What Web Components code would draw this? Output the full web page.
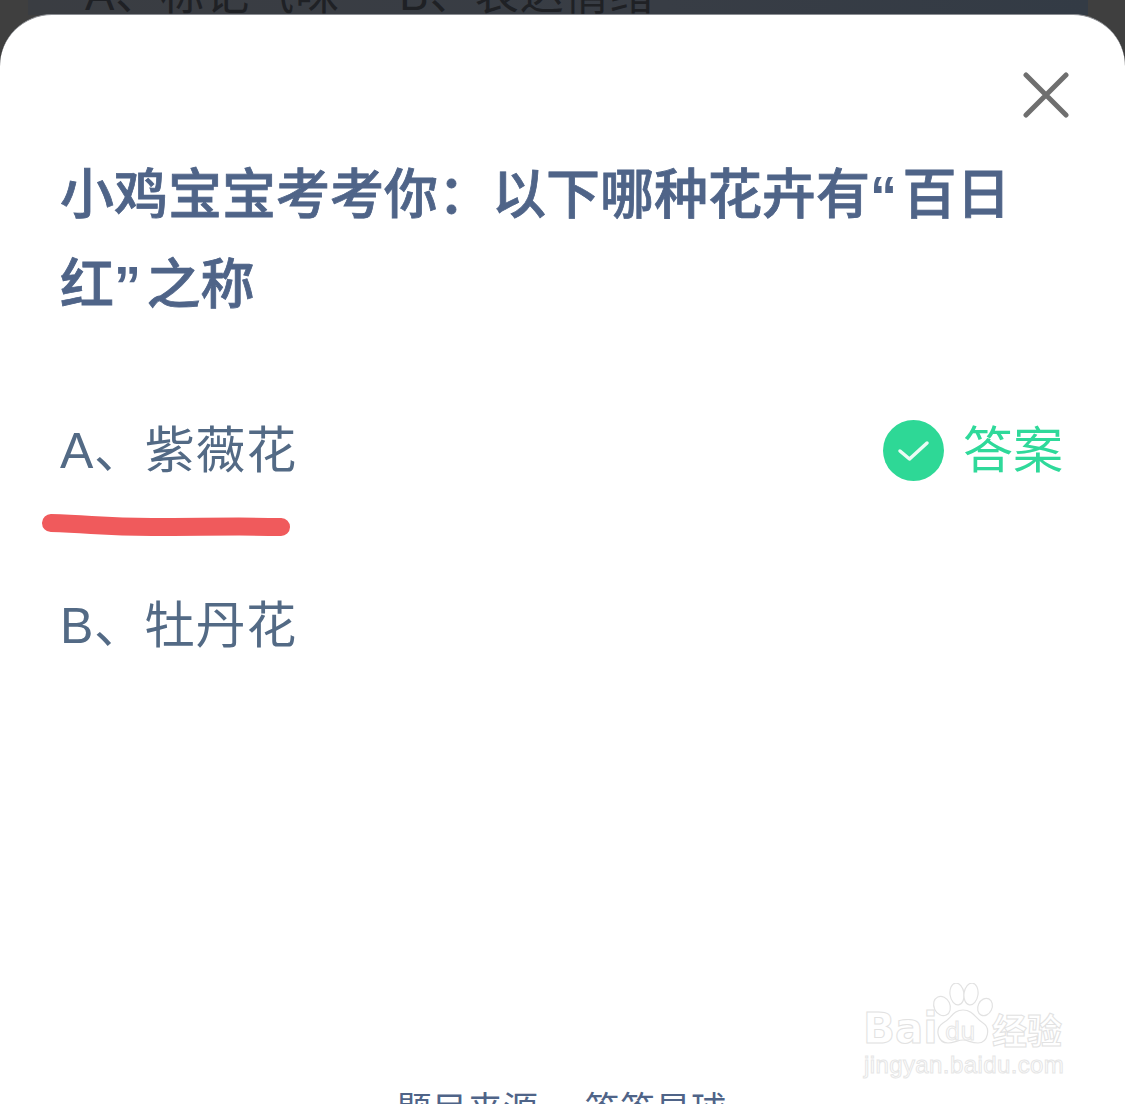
<!DOCTYPE html>
<html lang="zh">
<head>
<meta charset="utf-8">
<title>答题</title>
<style>
  html, body { margin: 0; height: 1104px; overflow: hidden; background: #3f3f3f; }
  body { font-family: "Liberation Sans", "Noto Sans CJK SC", sans-serif; }
  .q { font-weight: 700; letter-spacing: 5.5px; -webkit-text-stroke: 0; }
</style>
</head>
<body>
<quiz-page>
  <span slot="behind">A、标记气味</span>
  <span slot="behind">B、表达情绪</span>
  <quiz-sheet>
    <div slot="title"><span>小鸡宝宝考考你：以下哪种花卉有</span><span class="q">“</span><span>百日</span><br><span>红</span><span class="q">”</span><span>之称</span></div>
    <quiz-option answer marked>A、紫薇花</quiz-option>
    <quiz-option>B、牡丹花</quiz-option>
    <span slot="source">题目来源</span>
    <span slot="source">答答星球</span>
  </quiz-sheet>
  <baidu-mark></baidu-mark>
</quiz-page>

<script>
class QuizPage extends HTMLElement {
  constructor() {
    super();
    this.attachShadow({mode: 'open'}).innerHTML = `
      <style>
        :host { display: flex; flex-direction: column; height: 1104px; position: relative; overflow: hidden; }
        .behind {
          flex: none; height: 15px; margin: 0 37px 0 28px; padding-left: 57px; overflow: hidden;
          background: linear-gradient(90deg, #3a3d42, #383d45 60%, #333b45);
          color: #1f2125; font-size: 44px; line-height: 44px; letter-spacing: 1px;
        }
        .behind-inner { display: flex; gap: 59px; margin-top: -27px; }
      </style>
      <div class="behind"><div class="behind-inner"><slot name="behind"></slot></div></div>
      <slot></slot>
    `;
  }
}

class QuizSheet extends HTMLElement {
  constructor() {
    super();
    this.attachShadow({mode: 'open'}).innerHTML = `
      <style>
        :host {
          display: flex; flex-direction: column; flex: 1; min-height: 0;
          background: #fff; border-radius: 52px 52px 0 0;
          border-top: 1px solid #8a8d92; margin-top: -1px;
          padding: 0 62px 0 60px; color: #4f6488;
        }
        .close { align-self: flex-end; margin: 57px -6px 0 0; width: 46px; height: 46px; flex: none; display: block; }
        .title {
          margin: 32px 0 0 0; max-width: 960px; height: 180px;
          font-size: 54px; line-height: 90px; font-weight: 500; -webkit-text-stroke: .8px #4f6488;
        }
        .options { margin-top: 85px; display: flex; flex-direction: column; flex: 1; }
        .source {
          flex: none; display: flex; justify-content: center; gap: 46px;
          font-size: 35px; line-height: 40px; height: 14px; letter-spacing: .5px;
        }
      </style>
      <svg class="close" viewBox="0 0 46 46" fill="none" stroke="#6f6f6f" stroke-width="5" stroke-linecap="round">
        <path d="M3 3 L43 43 M43 3 L3 43"/>
      </svg>
      <div class="title"><slot name="title"></slot></div>
      <div class="options"><slot></slot></div>
      <div class="source"><slot name="source"></slot></div>
    `;
  }
}

class QuizOption extends HTMLElement {
  constructor() {
    super();
    const answer = this.hasAttribute('answer');
    const marked = this.hasAttribute('marked');
    this.attachShadow({mode: 'open'}).innerHTML = `
      <style>
        :host { display: block; height: 175px; position: relative; }
        .row { display: flex; align-items: center; height: 70px; font-size: 50px; color: #536a85; }
        .text { flex: 1; margin-top: -8px; letter-spacing: .7px; }
        .answer { display: flex; align-items: center; gap: 19px; color: #2fd99a; }
        .answer span { margin-top: -8px; }
        .answer svg { width: 61px; height: 61px; display: block; }
        .mark { position: absolute; left: -18px; top: 99px; width: 248px; height: 24px; display: block; }
      </style>
      <div class="row">
        <div class="text"><slot></slot></div>
        ${answer ? `
        <div class="answer">
          <svg viewBox="0 0 61 61">
            <circle cx="30.5" cy="30.5" r="30.5" fill="#2ed896"/>
            <path d="M17 31 L26.5 39 L44 23" fill="none" stroke="#eafbf4" stroke-width="3.5" stroke-linecap="round" stroke-linejoin="round"/>
          </svg>
          <span>答案</span>
        </div>` : ''}
      </div>
      ${marked ? `
      <svg class="mark" viewBox="0 0 248 24" fill="none">
        <path d="M9 9 C50 10 60 13 110 13 C160 13 200 12 239 13" stroke="#f05a5c" stroke-width="18" stroke-linecap="round"/>
      </svg>` : ''}
    `;
  }
}

// faint outlined watermark, sits over the sheet
class BaiduMark extends HTMLElement {
  constructor() {
    super();
    this.attachShadow({mode: 'open'}).innerHTML = `
      <style>
        :host { display: block; position: absolute; left: 860px; top: 980px; width: 210px; height: 105px; font-family: "DejaVu Sans", sans-serif; }
        span { position: absolute; color: #fff; -webkit-text-stroke: 1px #e2e2e2; white-space: nowrap; line-height: 1; }
        .bai { left: 3px; top: 28px; font-size: 42px; font-weight: 700; }
        .du { left: 85px; top: 40px; font-size: 24px; -webkit-text-stroke-color: #e6e6e6; }
        .jy { left: 4px; top: 73px; font-size: 24px; letter-spacing: .4px; font-family: "Liberation Sans", sans-serif; -webkit-text-stroke-color: #e6e6e6; }
        .cn { left: 132px; top: 31px; font-size: 35px; font-family: "Noto Sans CJK SC", sans-serif; font-weight: 700; }
        svg { position: absolute; left: 68px; top: 3px; width: 70px; height: 70px; }
      </style>
      <svg viewBox="0 0 70 70" fill="#fff" stroke="#e2e2e2" stroke-width="1.2">
        <ellipse cx="14" cy="23" rx="8" ry="10" transform="rotate(-25 14 23)"/>
        <ellipse cx="29" cy="11" rx="7" ry="11" transform="rotate(-8 29 11)"/>
        <ellipse cx="43" cy="11" rx="7" ry="11" transform="rotate(8 43 11)"/>
        <ellipse cx="57" cy="24" rx="7" ry="9" transform="rotate(25 57 24)"/>
        <path d="M35 27 C45 27 48 36 55 40 C63 45 60 60 50 60 C43 60 40 57 35 57 C30 57 26 60 20 60 C10 60 6 46 15 40 C23 36 25 27 35 27 Z"/>
      </svg>
      <span class="bai">Bai</span>
      <span class="du">du</span>
      <span class="cn">经验</span>
      <span class="jy">jingyan.baidu.com</span>
    `;
  }
}

customElements.define('quiz-page', QuizPage);
customElements.define('quiz-sheet', QuizSheet);
customElements.define('quiz-option', QuizOption);
customElements.define('baidu-mark', BaiduMark);
</script>
</body>
</html>
